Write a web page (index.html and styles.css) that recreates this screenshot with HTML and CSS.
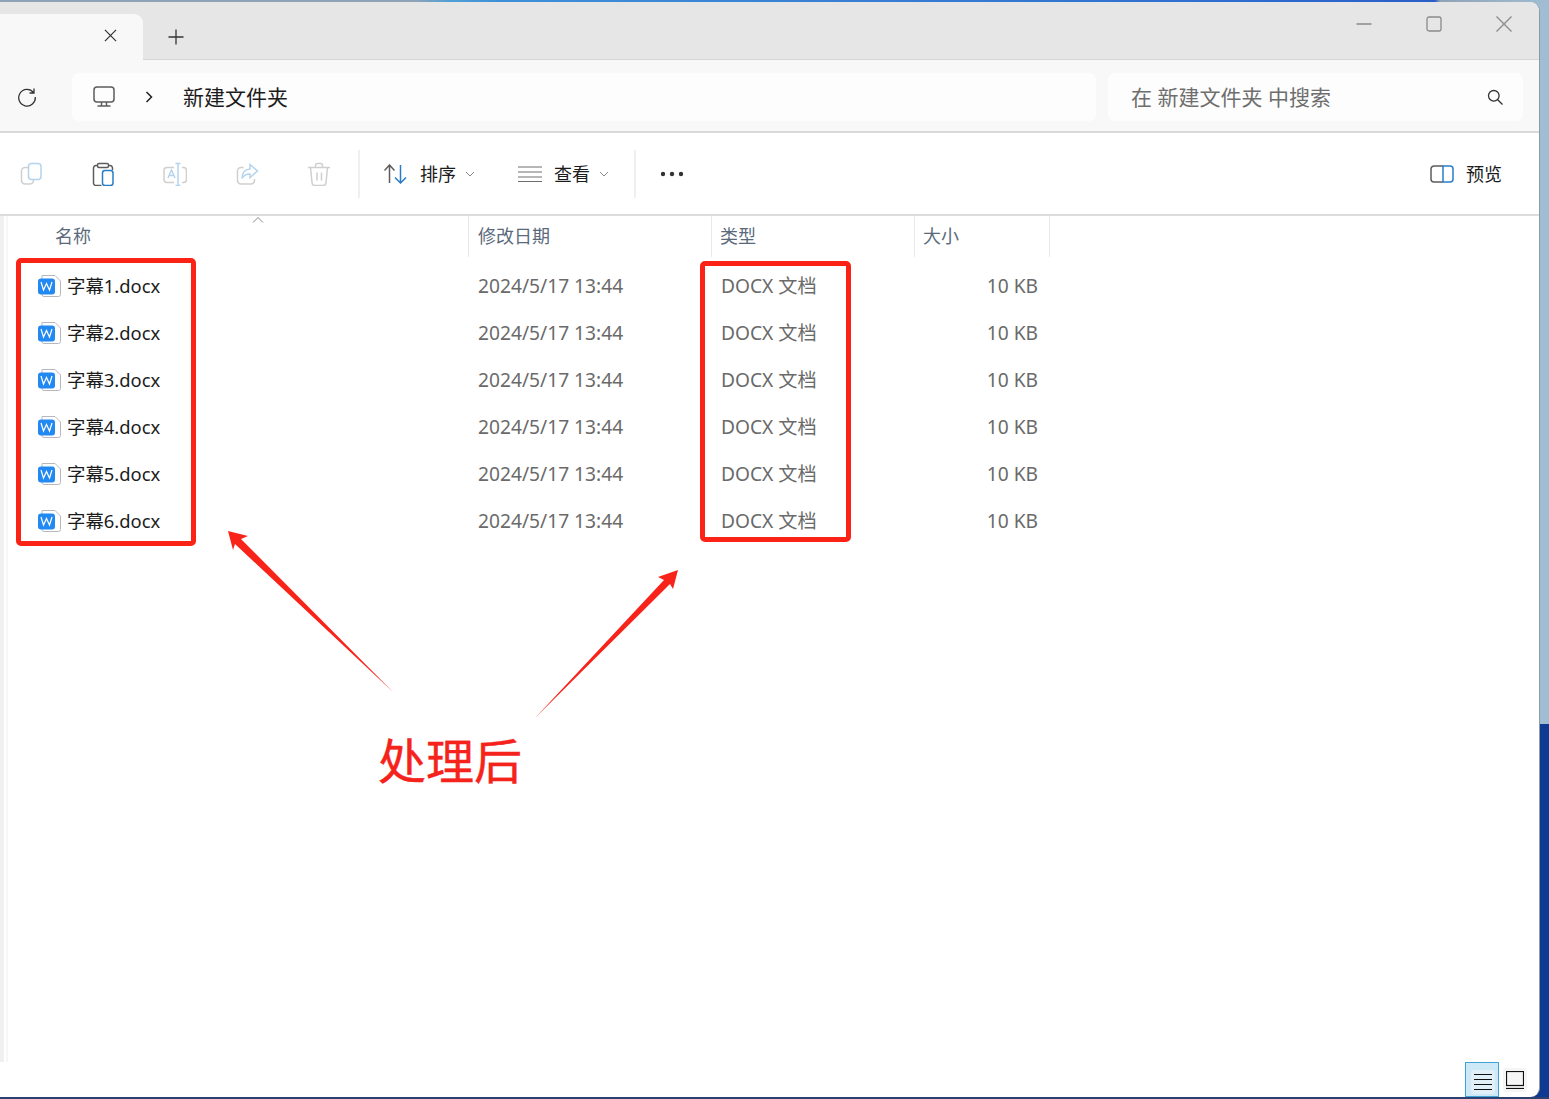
FILE: index.html
```html
<!DOCTYPE html>
<html lang="zh-CN">
<head>
<meta charset="utf-8">
<title>新建文件夹</title>
<link rel="stylesheet" href="styles.css">
</head>
<body>
<div class="window">
  <header class="tabbar">
    <div class="tab">
      <svg class="ic12 tab-close" viewBox="0 0 14 14"><path d="M1 1l12 12M13 1L1 13" class="st-dark"/></svg>
    </div>
    <svg class="ic16 tab-add" viewBox="0 0 16 16"><path d="M8 .5v15M.5 8h15" class="st-dark"/></svg>
    <div class="caption">
      <svg class="cap" viewBox="0 0 16 16"><path d="M.5 8h15" class="st-cap"/></svg>
      <svg class="cap cap-max" viewBox="0 0 16 16"><rect x="1" y="1" width="14" height="14" rx="2" class="st-cap"/></svg>
      <svg class="cap" viewBox="0 0 16 16"><path d="M.5.5l15 15M15.500.5l-15 15" class="st-cap"/></svg>
    </div>
  </header>

  <nav class="addressrow">
    <svg class="refresh" viewBox="0 0 20 20"><path d="M16.500 5.500A8.300 8.300 0 1 0 18.300 10M17 1.500v4.500h-4.500" class="st-dark"/></svg>
    <div class="addressbox">
      <svg class="monitor" viewBox="0 0 22 22"><rect x="1" y="1" width="20" height="15" rx="3" class="st-mid"/><path d="M8.500 16v3.500M13.500 16v3.500M4.500 20h13" class="st-mid"/></svg>
      <svg class="crumb" viewBox="0 0 8 12"><path d="M1.500 1l5 5-5 5" class="st-dark2"/></svg>
      <span class="crumb-text">新建文件夹</span>
    </div>
    <div class="searchbox">
      <span class="search-text">在 新建文件夹 中搜索</span>
      <svg class="search-ic" viewBox="0 0 16 16"><circle cx="6.800" cy="6.800" r="5.300" class="st-dark"/><path d="M10.700 10.700L15.500 15.500" class="st-dark"/></svg>
    </div>
  </nav>

  <div class="toolbar">
    <svg class="tool" viewBox="0 0 24 24"><rect x="9.500" y="1.500" width="12.500" height="16" rx="3" class="st-lblue"/><path d="M9.500 5.500H6A3.500 3.500 0 0 0 2.500 9v9.500A3.500 3.500 0 0 0 6 22h5a3.500 3.500 0 0 0 3.500-4" class="st-lgray"/></svg>
    <svg class="tool" viewBox="0 0 24 24"><path d="M6.500 3.500H5A2.800 2.800 0 0 0 2.500 6v15a2.500 2.500 0 0 0 2.500 2.500h5.500M17.500 3.500H19a2.800 2.800 0 0 1 2.500 2.500v2" class="st-mid"/><rect x="6.500" y="1.500" width="11" height="4" rx="1.500" class="st-mid"/><rect x="11.500" y="8.500" width="10.500" height="15" rx="2.500" class="st-blue"/></svg>
    <svg class="tool" viewBox="0 0 24 24"><path d="M11 5.500H4A3 3 0 0 0 1 8.500v9a3 3 0 0 0 3 3h7M19 5.500h1.500a3 3 0 0 1 3 3v9a3 3 0 0 1-3 3H19" class="st-lgray"/><path d="M15 1.500v22M12.500 1.500h5M12.500 23.500h5M5 16l3.500-8 3.500 8M6 13.500h5" class="st-lblue"/></svg>
    <svg class="tool" viewBox="0 0 24 24"><path d="M8.500 5.500H6A3.500 3.500 0 0 0 2.500 9v9.500A3.500 3.500 0 0 0 6 22h10a3.500 3.500 0 0 0 3.500-3.500V17" class="st-lgray"/><path d="M15 2.500l7.500 6.500-7.500 6.500V12c-4 0-6.500 1.500-8 4.500 0-5.500 3-9 8-9.500z" class="st-lblue"/></svg>
    <svg class="tool" viewBox="0 0 24 24"><path d="M1 5.500h22M8.500 5V3.500a2 2 0 0 1 2-2h3a2 2 0 0 1 2 2V5M3.500 5.500l1.500 15a3 3 0 0 0 3 3h8a3 3 0 0 0 3-3l1.500-15M10 10.500v8M14.500 10.500v8" class="st-lgray"/></svg>
    <span class="tsep sep-a"></span>
    <div class="tbtn btn-sort">
      <svg class="tool sort-ic" viewBox="0 0 24 20"><path d="M5.500 19V1M.5 6.500l5-5.500 5 5.500" class="st-mid"/><path d="M16.500 1v18M11 13.500l5.500 5.500 5.500-5.500" class="st-blue"/></svg>
      <span>排序</span>
      <svg class="chev" viewBox="0 0 10 6"><path d="M1 1l4 4 4-4" class="st-gray"/></svg>
    </div>
    <div class="tbtn btn-view">
      <svg class="tool view-ic" viewBox="0 0 24 16"><path d="M0 1h24M0 6h24M0 11h24M0 15.500h24" class="st-gray2"/></svg>
      <span>查看</span>
      <svg class="chev" viewBox="0 0 10 6"><path d="M1 1l4 4 4-4" class="st-gray"/></svg>
    </div>
    <span class="tsep sep-b"></span>
    <svg class="dots" viewBox="0 0 24 6"><circle cx="3" cy="3" r="2.200"/><circle cx="12" cy="3" r="2.200"/><circle cx="21" cy="3" r="2.200"/></svg>
    <div class="tbtn btn-preview">
      <svg class="preview-ic" viewBox="0 0 24 18"><path d="M13 1H4a3 3 0 0 0-3 3v10a3 3 0 0 0 3 3h9" class="st-mid"/><path d="M13 1v16h7a3 3 0 0 0 3-3V4a3 3 0 0 0-3-3z" class="st-blue"/></svg>
      <span>预览</span>
    </div>
  </div>

  <main class="content">
    <div class="grid head">
      <div class="hcell h-name">名称<svg class="caret" viewBox="0 0 12 6"><path d="M1 5.500l5-5 5 5" class="st-gray"/></svg></div>
      <div class="hcell">修改日期</div>
      <div class="hcell h-tight">类型</div>
      <div class="hcell h-tight h-end">大小</div>
    </div>
    <div class="rows">
      <div class="grid row"><div class="c-name"><svg class="doc" viewBox="0 0 23 22"><path d="M4 .5h13l5.500 5.500v13.500a2 2 0 0 1-2 2H6a2 2 0 0 1-2-2z" class="doc-page"/><rect y="3.500" width="17" height="16" rx="3" class="doc-badge"/><path d="M3 7l2.500 8 3-6.500 3 6.500 2.500-8" class="doc-w"/></svg>字幕1.docx</div><div class="c-date">2024/5/17 13:44</div><div class="c-type">DOCX 文档</div><div class="c-size">10 KB</div></div>
      <div class="grid row"><div class="c-name"><svg class="doc" viewBox="0 0 23 22"><path d="M4 .5h13l5.500 5.500v13.500a2 2 0 0 1-2 2H6a2 2 0 0 1-2-2z" class="doc-page"/><rect y="3.500" width="17" height="16" rx="3" class="doc-badge"/><path d="M3 7l2.500 8 3-6.500 3 6.500 2.500-8" class="doc-w"/></svg>字幕2.docx</div><div class="c-date">2024/5/17 13:44</div><div class="c-type">DOCX 文档</div><div class="c-size">10 KB</div></div>
      <div class="grid row"><div class="c-name"><svg class="doc" viewBox="0 0 23 22"><path d="M4 .5h13l5.500 5.500v13.500a2 2 0 0 1-2 2H6a2 2 0 0 1-2-2z" class="doc-page"/><rect y="3.500" width="17" height="16" rx="3" class="doc-badge"/><path d="M3 7l2.500 8 3-6.500 3 6.500 2.500-8" class="doc-w"/></svg>字幕3.docx</div><div class="c-date">2024/5/17 13:44</div><div class="c-type">DOCX 文档</div><div class="c-size">10 KB</div></div>
      <div class="grid row"><div class="c-name"><svg class="doc" viewBox="0 0 23 22"><path d="M4 .5h13l5.500 5.500v13.500a2 2 0 0 1-2 2H6a2 2 0 0 1-2-2z" class="doc-page"/><rect y="3.500" width="17" height="16" rx="3" class="doc-badge"/><path d="M3 7l2.500 8 3-6.500 3 6.500 2.500-8" class="doc-w"/></svg>字幕4.docx</div><div class="c-date">2024/5/17 13:44</div><div class="c-type">DOCX 文档</div><div class="c-size">10 KB</div></div>
      <div class="grid row"><div class="c-name"><svg class="doc" viewBox="0 0 23 22"><path d="M4 .5h13l5.500 5.500v13.500a2 2 0 0 1-2 2H6a2 2 0 0 1-2-2z" class="doc-page"/><rect y="3.500" width="17" height="16" rx="3" class="doc-badge"/><path d="M3 7l2.500 8 3-6.500 3 6.500 2.500-8" class="doc-w"/></svg>字幕5.docx</div><div class="c-date">2024/5/17 13:44</div><div class="c-type">DOCX 文档</div><div class="c-size">10 KB</div></div>
      <div class="grid row"><div class="c-name"><svg class="doc" viewBox="0 0 23 22"><path d="M4 .5h13l5.500 5.500v13.500a2 2 0 0 1-2 2H6a2 2 0 0 1-2-2z" class="doc-page"/><rect y="3.500" width="17" height="16" rx="3" class="doc-badge"/><path d="M3 7l2.500 8 3-6.500 3 6.500 2.500-8" class="doc-w"/></svg>字幕6.docx</div><div class="c-date">2024/5/17 13:44</div><div class="c-type">DOCX 文档</div><div class="c-size">10 KB</div></div>
    </div>
  </main>

  <footer class="statusbar">
    <div class="view-toggle active">
      <span class="view-inner"><svg class="status-ic" viewBox="0 0 18 16"><path d="M0 .5h18M0 5.500h18M0 10.500h18M0 15.500h18" class="st-black"/></svg></span>
    </div>
    <div class="view-toggle second">
      <span class="view-inner plain"><svg class="status-ic" viewBox="0 0 18 18"><rect x=".5" y=".5" width="17" height="14" class="st-black"/><path d="M0 17.500h18" class="st-black"/></svg></span>
    </div>
  </footer>
</div>

<div class="mark box-a"></div>
<div class="mark box-b"></div>
<svg class="arrows" viewBox="0 0 1549 1099">
  <polygon points="228,531 248,536 241,539 393,692 235,544 233,550"/>
  <polygon points="678,570 658,577 664,580 535,718 670,584 673,589"/>
</svg>
<div class="note">处理后</div>
</body>
</html>
```
FILE: styles.css
```css
* { box-sizing: border-box; }
html, body { margin: 0; }
body {
  position: relative;
  width: 1549px;
  height: 1099px;
  overflow: hidden;
  padding: 2px 9px 2px 0;
  font-family: "Noto Sans", "Noto Sans CJK SC", sans-serif;
  font-size: 18px;
  background:
    linear-gradient(90deg, #8fa3b6 0 415px, #4f9fd6 450px, #3f8fd8 500px, #2f6fd0 1200px, #2a5fc8 1435px, #8fa3b6 1440px, #a0bdd3 1549px) top / 100% 3px no-repeat,
    linear-gradient(#2c4170, #2c4170) bottom / 100% 2px no-repeat,
    linear-gradient(180deg, #a0bdd3 0 724px, #0f3a91 724px);
}
svg { display: block; flex: none; fill: none; }

.window {
  width: 1540px;
  height: 1095px;
  display: flex;
  flex-direction: column;
  background: #fff;
  border-right: 1px solid #8f9aa5;
  border-radius: 0 9px 9px 0;
  overflow: hidden;
}

/* stroke styles */
.st-dark { stroke: #333; stroke-width: 1.3; }
.st-dark2 { stroke: #222; stroke-width: 1.500; }
.st-mid { stroke: #5c5c5c; stroke-width: 1.500; }
.st-cap { stroke: #8a8a8a; stroke-width: 1.300; }
.st-lblue { stroke: #b4d4ee; stroke-width: 1.500; }
.st-lgray { stroke: #cfcfcf; stroke-width: 1.500; }
.st-blue { stroke: #2a7cc7; stroke-width: 1.500; }
.st-gray { stroke: #8a8a8a; stroke-width: 1; }
.st-gray2 { stroke: #6e6e6e; stroke-width: 1.200; }
.st-black { stroke: #111; stroke-width: 1.200; }

/* tab strip */
.tabbar {
  height: 58px;
  flex: none;
  display: flex;
  align-items: flex-end;
  background: #e6e6e6;
  border-bottom: 1px solid #d6d6d6;
  border-top-right-radius: 9px;
}
.tab {
  width: 143px;
  height: 46px;
  margin-bottom: -1px;
  background: #f8f8f8;
  border-top-right-radius: 9px;
  display: flex;
  justify-content: flex-end;
  padding: 15px 26px 0 0;
}
.ic12 { width: 13px; height: 13px; }
.ic16 { width: 16px; height: 16px; }
.tab-add { margin: 0 0 14px 25px; }
.caption {
  margin-left: auto;
  align-self: flex-start;
  display: flex;
  gap: 54px;
  padding: 14px 27px 0 0;
}
.cap { width: 16px; height: 16px; }

/* address row */
.addressrow {
  height: 73px;
  flex: none;
  display: flex;
  align-items: flex-start;
  background: #f8f8f8;
  border-bottom: 2px solid #d9d9d9;
  padding: 13px 16px 0 17px;
}
.refresh { width: 20px; height: 20px; margin: 14px 35px 0 0; }
.addressbox, .searchbox {
  height: 48px;
  background: #fdfdfd;
  border-radius: 7px;
  display: flex;
  align-items: center;
}
.addressbox { width: 1024px; padding-left: 21px; }
.monitor { width: 22px; height: 22px; }
.crumb { width: 8px; height: 12px; margin: 0 30px 0 30px; }
.crumb-text, .search-text { font-size: 21px; line-height: 28px; }
.crumb-text { color: #1c1c1c; }
.searchbox {
  width: 415px;
  margin-left: 12px;
  padding: 0 20px 0 23px;
  justify-content: space-between;
}
.search-text { color: #6e6e6e; }
.search-ic { width: 16px; height: 16px; }

/* command bar */
.toolbar {
  height: 83px;
  flex: none;
  display: flex;
  align-items: center;
  gap: 48px;
  padding-left: 19px;
  border-bottom: 2px solid #dcdcdc;
  color: #1c1c1c;
}
.tool { width: 24px; height: 24px; }
.tsep { width: 2px; height: 48px; background: #efefef; }
.sep-a { margin-left: -21px; margin-right: -24px; }
.tbtn { display: flex; align-items: center; }
.tbtn span { line-height: 24px; }
.sort-ic { height: 20px; margin-right: 12px; }
.view-ic { height: 16px; margin-right: 12px; }
.chev { width: 10px; height: 6px; margin-left: 9px; }
.btn-view { margin-left: -5px; }
.sep-b { margin-left: -23px; margin-right: -24px; }
.dots { width: 24px; height: 6px; fill: #333; }
.btn-preview { margin-left: auto; margin-right: 37px; }
.preview-ic { width: 24px; height: 18px; margin-right: 12px; }

/* file list */
.content {
  flex: 1;
  min-height: 0;
  background: linear-gradient(90deg, #f0f0f0 0 4px, #fff 4px 6px, #f7f7f7 6px 8px, #fff 8px);
  display: flex;
  flex-direction: column;
}
.grid {
  display: grid;
  grid-template-columns: 468px 243px 203px 136px;
  width: 1050px;
}
.head { height: 41px; }
.hcell {
  position: relative;
  height: 41px;
  line-height: 41px;
  padding-left: 9px;
  color: #5a6a7c;
  border-left: 1px solid #e8e8e8;
}
.h-tight { padding-left: 8px; }
.h-name { border-left: 0; padding-left: 55px; }
.h-end { border-right: 1px solid #e8e8e8; }
.caret { position: absolute; left: 252px; top: 1px; width: 12px; height: 6px; }
.rows { padding-top: 5px; }
.row { height: 47px; align-items: center; color: #6a6a6a; font-size: 19.200px; line-height: 28px; }
.c-name { display: flex; align-items: center; gap: 6px; padding-left: 38px; color: #1c1c1c; font-size: 18.400px; }
.c-date { padding-left: 10px; }
.c-type { padding-left: 10px; }
.c-size { text-align: right; padding-right: 12px; }
.doc { width: 23px; height: 22px; margin-top: 1px; }
.doc-page { fill: #fff; stroke: #b5b9bf; stroke-width: 1; }
.doc-badge { fill: #2288f2; }
.doc-w { stroke: #fff; stroke-width: 1.200; }

/* status bar */
.statusbar {
  height: 35px;
  flex: none;
  display: flex;
  justify-content: flex-end;
  gap: 4px;
  padding-right: 12px;
}
.view-toggle { display: flex; align-items: center; }
.view-toggle.active { width: 34px; background: #cde8f7; border: 1px solid #3fa3d3; padding: 5px 0 0 5px; }
.view-toggle.second { width: 24px; }
.view-inner { width: 24px; height: 24px; border-radius: 3px; background: #e1eff8; display: flex; align-items: center; justify-content: center; }
.view-inner.plain { background: #f5f5f5; }
.status-ic { width: 18px; height: 18px; }

/* annotations drawn over the window */
.mark { position: absolute; border: 5px solid #fa2316; border-radius: 5px; }
.box-a { left: 16px; top: 258px; width: 180px; height: 288px; }
.box-b { left: 700px; top: 261px; width: 151px; height: 281px; }
.arrows { position: absolute; left: 0; top: 0; width: 1549px; height: 1099px; fill: #f8241a; }
.note {
  position: absolute;
  left: 378px;
  top: 723px;
  font-family: "Noto Sans CJK SC", sans-serif;
  font-size: 48px;
  line-height: 70px;
  color: #f5231b;
  -webkit-text-stroke: .4px #f5231b;
}
```
